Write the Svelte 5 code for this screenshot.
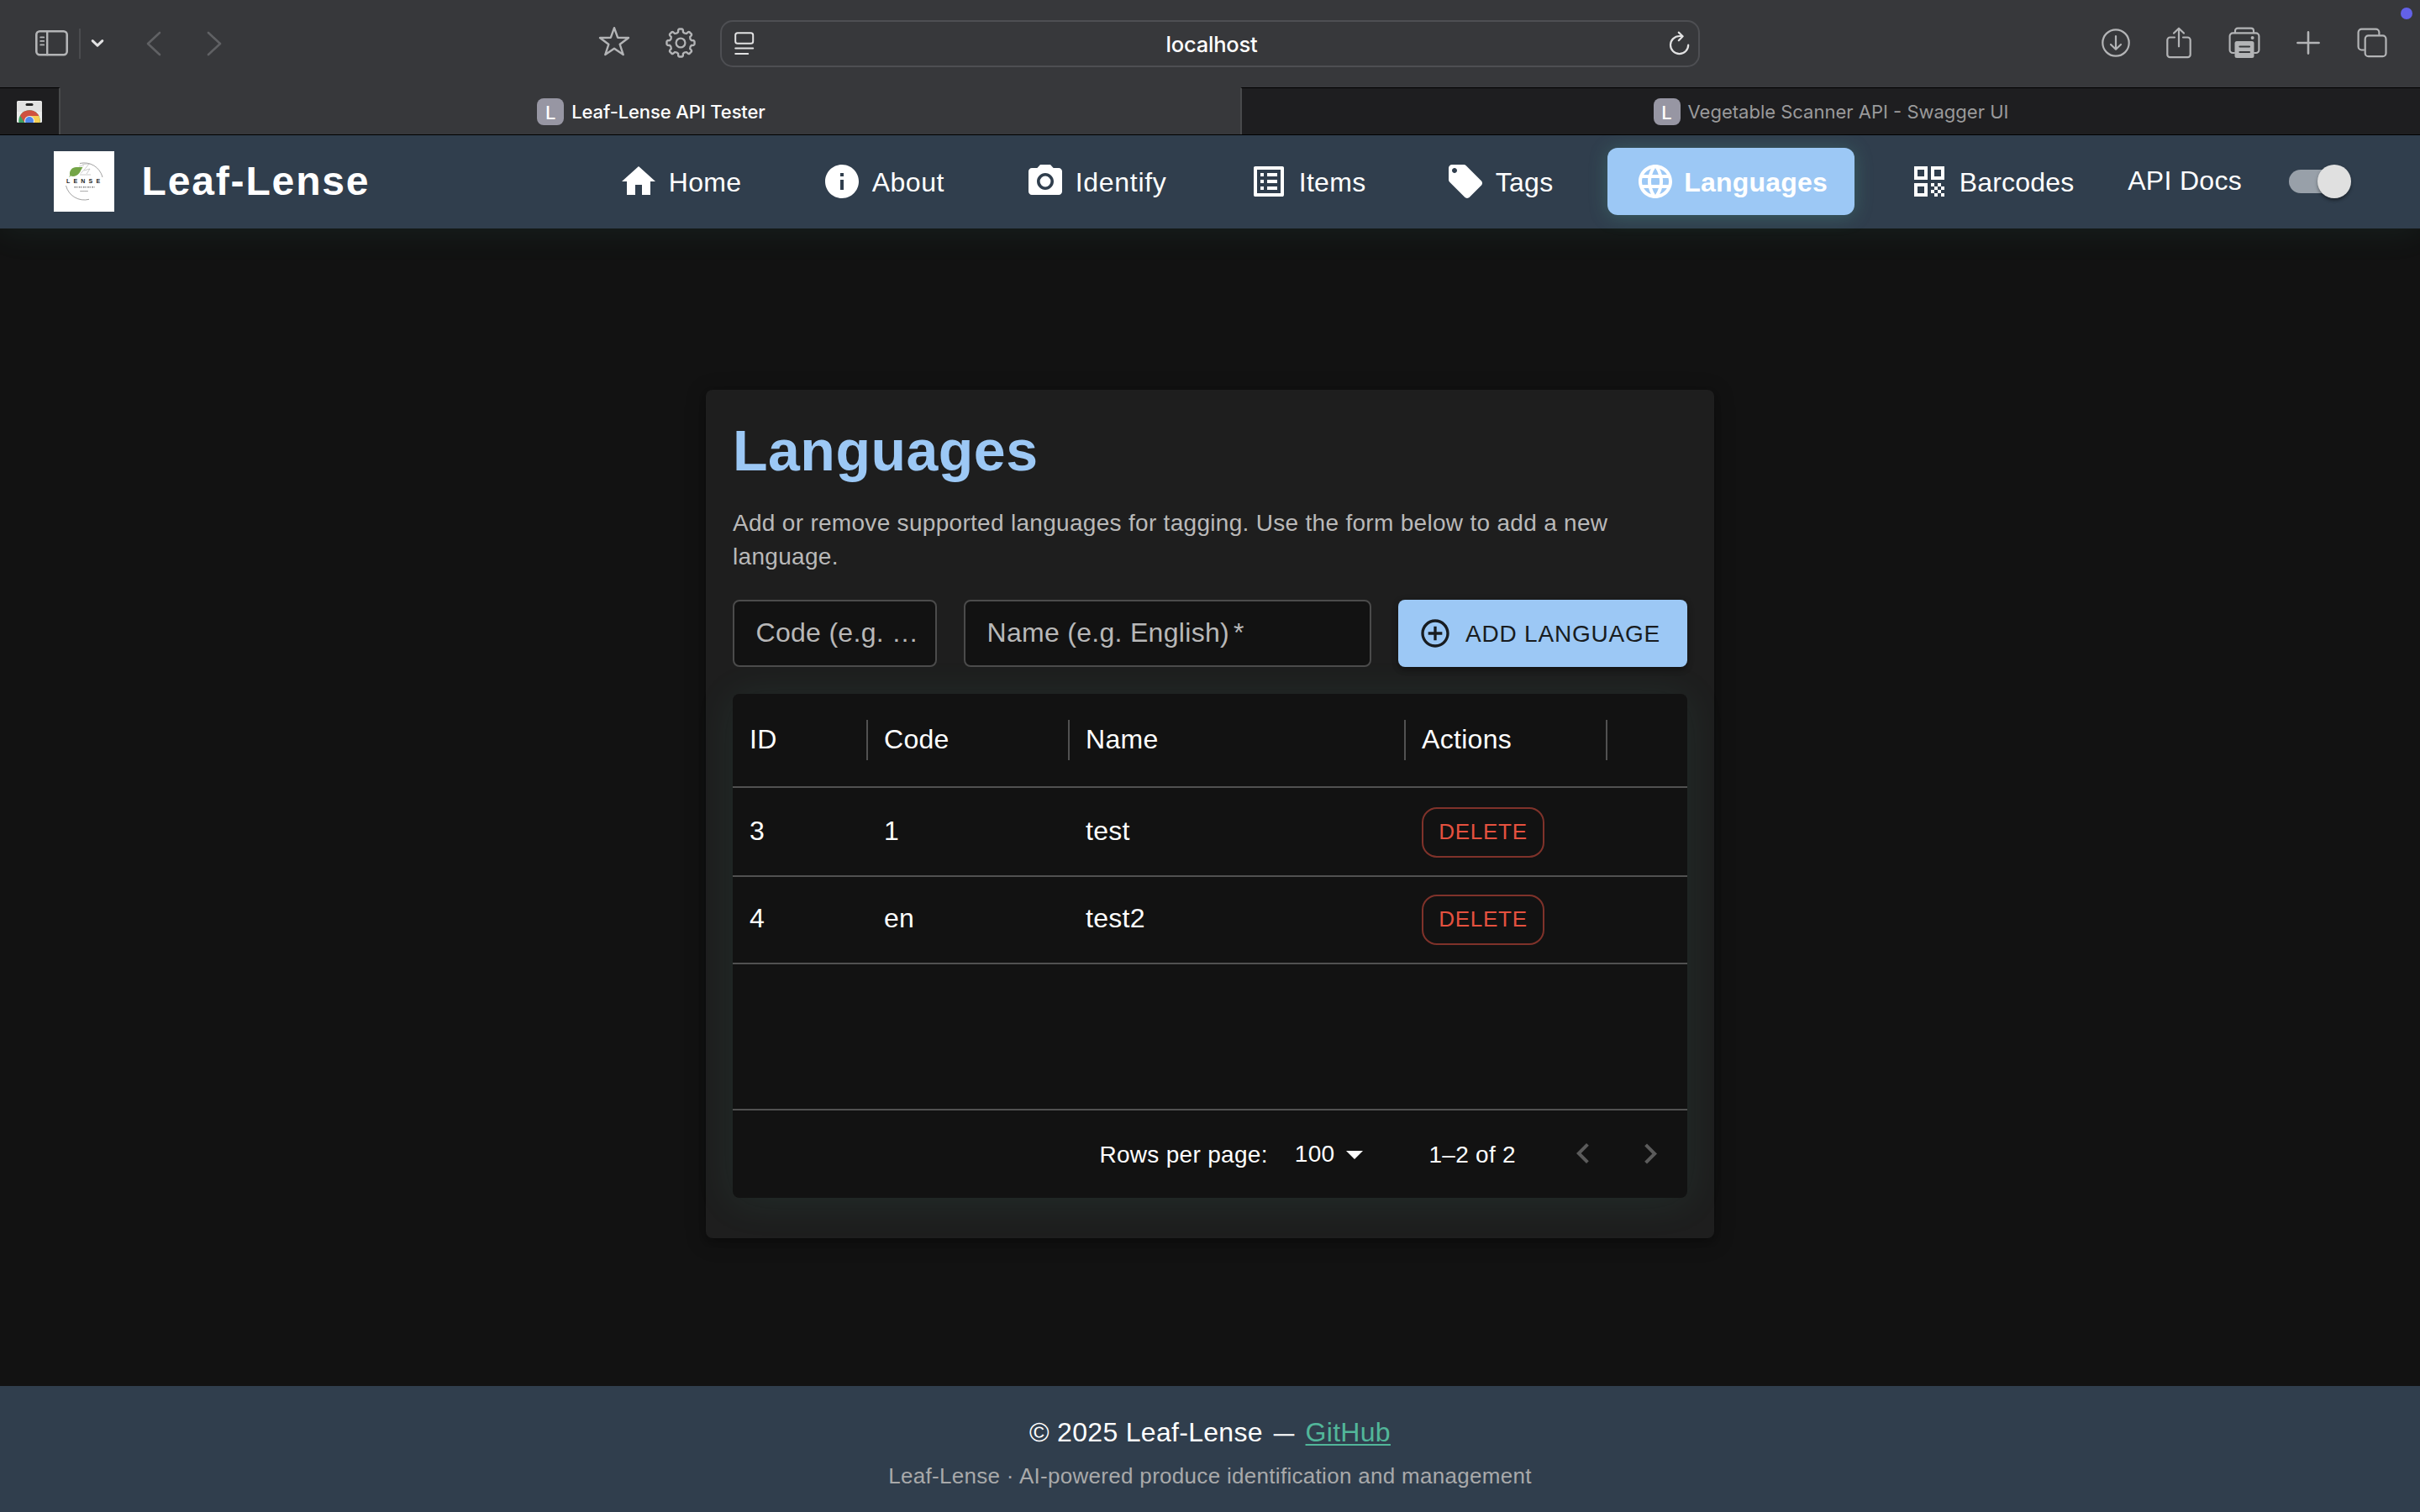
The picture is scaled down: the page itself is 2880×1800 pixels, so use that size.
<script>
  const nav = [
    { label: 'Home', width: 210, tracking: 0.3, icon: 'M10 20v-6h4v6h5v-8h3L12 3 2 12h3v8z' },
    {
      label: 'About',
      width: 210,
      tracking: 0.5,
      icon: 'M12 2C6.48 2 2 6.48 2 12s4.48 10 10 10 10-4.48 10-10S17.52 2 12 2m1 15h-2v-6h2zm0-8h-2V7h2z'
    },
    {
      label: 'Identify',
      width: 234,
      tracking: 0.7,
      icon: 'M12 8.8a3.2 3.2 0 1 0 0 6.4 3.2 3.2 0 1 0 0-6.4M9 2 7.17 4H4c-1.1 0-2 .9-2 2v12c0 1.1.9 2 2 2h16c1.1 0 2-.9 2-2V6c0-1.1-.9-2-2-2h-3.17L15 2zm3 15c-2.76 0-5-2.24-5-5s2.24-5 5-5 5 2.24 5 5-2.24 5-5 5'
    },
    {
      label: 'Items',
      width: 202,
      tracking: 0.3,
      icon: 'M19 5v14H5V5zm1.1-2H3.9c-.5 0-.9.4-.9.9v16.2c0 .4.4.9.9.9h16.2c.4 0 .9-.5.9-.9V3.9c0-.5-.5-.9-.9-.9M11 7h6v2h-6zm0 4h6v2h-6zm0 4h6v2h-6zM7 7h2v2H7zm0 4h2v2H7zm0 4h2v2H7z'
    },
    {
      label: 'Tags',
      width: 194,
      tracking: 0.3,
      icon: 'm21.41 11.58-9-9C12.05 2.22 11.55 2 11 2H4c-1.1 0-2 .9-2 2v7c0 .55.22 1.05.59 1.42l9 9c.36.36.86.58 1.41.58s1.05-.22 1.41-.59l7-7c.37-.36.59-.86.59-1.41s-.23-1.06-.59-1.42M5.5 7C4.67 7 4 6.33 4 5.5S4.67 4 5.5 4 7 4.67 7 5.5 6.33 7 5.5 7'
    },
    {
      label: 'Languages',
      width: 294,
      tracking: 0.2,
      active: true,
      icon: 'M11.99 2C6.47 2 2 6.48 2 12s4.47 10 9.99 10C17.52 22 22 17.52 22 12S17.52 2 11.99 2m6.93 6h-2.95c-.32-1.25-.78-2.45-1.38-3.56 1.84.63 3.37 1.91 4.33 3.56M12 4.04c.83 1.2 1.48 2.53 1.91 3.96h-3.82c.43-1.43 1.08-2.76 1.91-3.96M4.26 14C4.1 13.36 4 12.69 4 12s.1-1.36.26-2h3.38c-.08.66-.14 1.32-.14 2s.06 1.34.14 2zm.82 2h2.95c.32 1.25.78 2.45 1.38 3.56-1.84-.63-3.37-1.9-4.33-3.56m2.95-8H5.08c.96-1.66 2.49-2.93 4.33-3.56C8.81 5.55 8.35 6.75 8.03 8M12 19.96c-.83-1.2-1.48-2.53-1.91-3.96h3.82c-.43 1.43-1.08 2.76-1.91 3.96M14.34 14H9.66c-.09-.66-.16-1.32-.16-2s.07-1.35.16-2h4.68c.09.65.16 1.32.16 2s-.07 1.34-.16 2m.25 5.56c.6-1.11 1.06-2.31 1.38-3.56h2.95c-.96 1.65-2.49 2.93-4.33 3.56M16.36 14c.08-.66.14-1.32.14-2s-.06-1.34-.14-2h3.38c.16.64.26 1.31.26 2s-.1 1.36-.26 2z'
    },
    {
      label: 'Barcodes',
      width: 260,
      tracking: 0.2,
      icon: 'M3 11h8V3H3zm2-6h4v4H5zM3 21h8v-8H3zm2-6h4v4H5zm8-12v8h8V3zm6 6h-4V5h4zm0 10h2v2h-2zm-6-6h2v2h-2zm2 2h2v2h-2zm-2 2h2v2h-2zm2 2h2v2h-2zm2-2h2v2h-2zm0-4h2v2h-2zm2 2h2v2h-2z'
    }
  ];

  const rows = [
    { id: 3, code: '1', name: 'test' },
    { id: 4, code: 'en', name: 'test2' }
  ];

  // Eight-toothed gear outline centred on (18, 18).
  const polar = (r, deg) => {
    const a = ((deg - 90) * Math.PI) / 180;
    return `${(18 + r * Math.cos(a)).toFixed(2)} ${(18 + r * Math.sin(a)).toFixed(2)}`;
  };
  let gear = '';
  for (let k = 0; k < 8; k++) {
    const c = k * 45;
    gear += `${k ? 'L' : 'M'}${polar(13.2, c - 13)}L${polar(15.8, c - 10)}Q${polar(16.6, c - 8)} ${polar(16.6, c - 5)}L${polar(16.6, c + 5)}Q${polar(16.6, c + 8)} ${polar(15.8, c + 10)}L${polar(13.2, c + 13)}Q${polar(11.8, c + 22.5)} ${polar(13.2, c + 32)}`;
  }
  gear += 'Z';
</script>

<div class="page">
  <div class="toolbar">
    <div class="tools left">
      <svg class="sidebar" viewBox="0 0 40 32" width="40" height="32">
        <rect x="1.3" y="1.3" width="36.4" height="28" rx="4" stroke-width="2.6" />
        <path d="M14.2 1.5v27.5" stroke-width="2.4" />
        <path d="M6.2 8.4h4M6.2 12.9h4M6.2 17.4h4" stroke-width="1.8" />
      </svg>
      <span class="rule"></span>
      <svg class="caret" viewBox="0 0 16 12" width="16" height="12"><path d="M2.2 2.6 8 8.2l5.8-5.6" stroke-width="3" /></svg>
      <svg class="back" viewBox="0 0 18 30" width="18" height="30"><path d="M16 2 2 15l14 13" stroke-width="2.6" /></svg>
      <svg class="forward" viewBox="0 0 18 30" width="18" height="30"><path d="M2 2l14 13L2 28" stroke-width="2.6" /></svg>
    </div>
    <svg class="star" viewBox="0 0 38 36" width="38" height="36">
      <path d="M19 2.2 23.1 13.7 36 14 25.7 21.8 29.7 34 19 26.7 8.3 34 12.3 21.8 2 14 14.9 13.7z" stroke-width="2.4" />
    </svg>
    <svg class="gear" viewBox="0 0 36 36" width="36" height="36">
      <path d={gear} stroke-width="2.4" />
      <circle cx="18" cy="18" r="5.4" stroke-width="2.3" />
    </svg>
    <div class="address">
      <svg viewBox="0 0 24 28" width="24" height="28">
        <rect x="1.2" y="1.2" width="21" height="12.6" rx="2.6" stroke-width="2" />
        <path d="M1.2 19.6h21M1.2 26h15" stroke-width="2" />
      </svg>
      <span>localhost</span>
      <svg viewBox="0 0 26 30" width="26" height="30">
        <path d="M23.2 16.6a10.6 10.6 0 1 1-10.6-10.6h3.6" stroke-width="2.2" />
        <path d="M11.8 1.6 16.6 6.2 11.8 11.2" stroke-width="2.2" />
      </svg>
    </div>
    <div class="tools right">
      <svg viewBox="0 0 36 36" width="36" height="36">
        <circle cx="18" cy="18" r="15.7" stroke-width="2.2" />
        <path d="M18 10v15.5M12 20l6 5.7 6-5.7" stroke-width="2.2" />
      </svg>
      <svg class="share" viewBox="0 0 32 38" width="32" height="38">
        <path d="M11 12.5H5.5a3.2 3.2 0 0 0-3.2 3.2v17.3a3.2 3.2 0 0 0 3.2 3.2h21a3.2 3.2 0 0 0 3.2-3.2V15.7a3.2 3.2 0 0 0-3.2-3.2H21M16 23.3V2M10 7.5l6-5.8 6 5.8" stroke-width="2.2" />
      </svg>
      <svg class="print" viewBox="0 0 38 38" width="38" height="38">
        <path d="M8 7V4.6a3 3 0 0 1 3-3h16a3 3 0 0 1 3 3V7M7 31H5.2a3.6 3.6 0 0 1-3.6-3.6V11a3.6 3.6 0 0 1 3.6-3.6h27.6a3.6 3.6 0 0 1 3.6 3.6v16.4a3.6 3.6 0 0 1-3.6 3.6H31" stroke-width="2.1" />
        <path class="solid" d="M10 17h18a2.5 2.5 0 0 1 2.5 2.5v15a2.5 2.5 0 0 1-2.5 2.5H10a2.5 2.5 0 0 1-2.5-2.5v-15A2.5 2.5 0 0 1 10 17z" />
        <path class="cut" d="M13.5 23.5h11.5M13.5 30h11.5" stroke-width="2.2" />
        <circle class="solid" cx="28.6" cy="13" r="2" />
      </svg>
      <svg class="plus" viewBox="0 0 28 28" width="28" height="28"><path d="M14 1.4v25.2M1.4 14h25.2" stroke-width="2.6" /></svg>
      <svg class="overview" viewBox="0 0 36 36" width="36" height="36">
        <rect x="9.7" y="9.4" width="24.8" height="24.8" rx="4" stroke-width="2.2" />
        <path d="M8 26.5H5.6a4 4 0 0 1-4-4V5.6a4 4 0 0 1 4-4h16.8a4 4 0 0 1 4 4V7.8" stroke-width="2.2" />
      </svg>
    </div>
    <span class="indicator"></span>
  </div>

  <div class="tabs">
    <div class="pinned">
      <svg viewBox="0 0 30 26" width="30" height="26">
        <rect width="30" height="26" rx="1.5" fill="#ececec" />
        <path fill="#e2e2e2" d="M0 1h30v12H0z" />
        <rect x="10.5" y="3" width="9" height="3" rx="1.5" fill="#222" />
        <circle cx="15" cy="24" r="12.8" fill="#3fa162" />
        <path fill="#d0513f" d="M4 17.4A12.8 12.8 0 0 1 26.6 18.5L15 19.5 8.5 25z" />
        <path fill="#f6cf55" d="M15 18h11.3a12.8 12.8 0 0 1 1.3 8H15z" />
        <circle cx="15" cy="24" r="6" fill="#ececec" />
        <circle cx="15" cy="24" r="4.9" fill="#4f86ec" />
      </svg>
    </div>
    <div class="tab current"><span class="badge">L</span><span>Leaf-Lense API Tester</span></div>
    <div class="tab"><span class="badge">L</span><span>Vegetable Scanner API - Swagger UI</span></div>
  </div>

  <header>
    <svg class="logo" viewBox="0 0 72 72" width="72" height="72">
      <rect width="72" height="72" fill="#fff" />
      <g fill="none" stroke="#8b8b8b" stroke-width=".8">
        <path d="M31 14.5A22.5 22.5 0 0 1 58 31" />
        <path d="M14.5 41A22.5 22.5 0 0 0 42 57.3" />
        <path d="M32 26.5q6-6 10-11.5M34 15.5l9-.5M31 28h13M36 23l7-2-4 6M30 18l6-1" stroke="#b5b5b5" stroke-width=".7" />
        <path d="M24.5 42.8h24" stroke="#777" stroke-width="1.4" stroke-dasharray="1.6 .9 1.2 1.5" />
        <path d="M31.5 47.6h9.5" stroke="#888" stroke-width="1" stroke-dasharray="1.4 .5" />
      </g>
      <path fill="#74a547" d="M18 31c.5-.8.8-1.5 1.3-2.2-1.5-6 3-10 7.7-9.8 3 .3 5-.2 7.5 0-2 2.5-2.5 5-4.5 7.5-2.5 3.2-6.5 4.2-10 3z" />
      <text x="15" y="38" font-size="7">LENSE</text>
    </svg>
    <span class="brand">Leaf-Lense</span>
    <nav>
      {#each nav as item}
        <a class:active={item.active} style:width="{item.width}px" style:letter-spacing="{item.tracking}px">
          <svg viewBox="0 0 24 24" width="48" height="48"><path d={item.icon} /></svg>
          <span>{item.label}</span>
        </a>
      {/each}
    </nav>
    <span class="docs">API Docs</span>
    <span class="switch"><span class="thumb"></span></span>
  </header>

  <main>
    <section class="card">
      <h1>Languages</h1>
      <p>Add or remove supported languages for tagging. Use the form below to add a new language.</p>
      <div class="form">
        <div class="field code"><span>Code (e.g. …</span></div>
        <div class="field name"><span>Name (e.g. English)</span><span class="required">*</span></div>
        <button class="add">
          <svg viewBox="0 0 24 24" width="40" height="40">
            <path d="M13 7h-2v4H7v2h4v4h2v-4h4v-2h-4zm-1-5C6.48 2 2 6.48 2 12s4.48 10 10 10 10-4.48 10-10S17.52 2 12 2m0 18c-4.41 0-8-3.59-8-8s3.59-8 8-8 8 3.59 8 8-3.59 8-8 8" />
          </svg>
          <span>ADD LANGUAGE</span>
        </button>
      </div>

      <div class="grid">
        <div class="columns head">
          <span>ID</span><span>Code</span><span>Name</span><span>Actions</span>
        </div>
        <div class="body">
          {#each rows as row}
            <div class="columns row">
              <span>{row.id}</span><span>{row.code}</span><span>{row.name}</span>
              <div class="actions"><button class="delete">DELETE</button></div>
            </div>
          {/each}
        </div>
        <div class="pager">
          <span class="per-page">Rows per page:</span>
          <span class="size">100</span>
          <svg class="drop" viewBox="0 0 24 24" width="48" height="48"><path d="m7 10 5 5 5-5z" /></svg>
          <span class="range">1–2 of 2</span>
          <svg class="prev" viewBox="0 0 24 24" width="48" height="48"><path d="M15.41 16.09l-4.58-4.59 4.58-4.59L14 5.5l-6 6 6 6z" /></svg>
          <svg class="next" viewBox="0 0 24 24" width="48" height="48"><path d="M8.59 16.34l4.58-4.59-4.58-4.59L10 5.75l6 6-6 6z" /></svg>
        </div>
      </div>
    </section>
  </main>

  <footer>
    <div class="copyright">© 2025 Leaf-Lense <span class="dash">—</span> <a class="link">GitHub</a></div>
    <div class="tagline">Leaf-Lense · AI-powered produce identification and management</div>
  </footer>
</div>

<style>
  :global(body) {
    margin: 0;
    background: #121212;
  }
  * {
    box-sizing: border-box;
  }
  .page {
    display: flex;
    flex-direction: column;
    width: 2880px;
    height: 1800px;
    overflow: hidden;
    color: #fff;
    font-family: 'Liberation Sans', Arial, sans-serif;
    font-size: 32px;
    letter-spacing: 0.3px;
    white-space: nowrap;
  }
  svg {
    display: block;
    flex: none;
  }
  button {
    font: inherit;
    letter-spacing: inherit;
    margin: 0;
    padding: 0;
  }

  /* Browser toolbar */
  .toolbar {
    position: relative;
    flex: none;
    display: flex;
    align-items: flex-start;
    height: 104px;
    background: #37383b;
  }
  .toolbar svg {
    fill: none;
    stroke: #b3b4b6;
    stroke-linecap: round;
    stroke-linejoin: round;
  }
  .tools {
    display: flex;
    align-items: center;
    height: 104px;
    padding-bottom: 35px;
  }
  .left {
    width: 712px;
    padding-top: 34px;
    padding-left: 42px;
  }
  .rule {
    width: 2px;
    height: 36px;
    margin-left: 12px;
    background: #4b4c4f;
  }
  .toolbar .caret {
    margin-left: 12px;
    stroke: #e2e2e3;
  }
  .toolbar .back {
    margin-left: 50px;
    stroke: #606164;
  }
  .toolbar .forward {
    margin-left: 54px;
    stroke: #606164;
  }
  .star {
    margin-top: 31px;
  }
  .gear {
    margin: 33px 0 0 42px;
  }
  .address {
    display: flex;
    align-items: center;
    justify-content: space-between;
    width: 1166px;
    height: 56px;
    margin: 24px 0 0 29px;
    padding: 0 9px 0 15px;
    border: 2px solid #4e4f53;
    border-radius: 15px;
    font: 500 25.5px Inter, sans-serif;
    letter-spacing: -0.2px;
  }
  .toolbar .address svg {
    stroke: #e2e2e3;
  }
  .right {
    margin-left: 477px;
    padding-top: 33px;
  }
  .share {
    margin-left: 40.5px;
  }
  .print,
  .overview {
    margin-left: 43.5px;
  }
  .plus {
    margin-left: 43px;
  }
  .toolbar .solid {
    fill: #b3b4b6;
    stroke: none;
  }
  .toolbar .cut {
    stroke: #37383b;
  }
  .indicator {
    position: absolute;
    top: 9px;
    right: 9px;
    width: 14px;
    height: 14px;
    border-radius: 50%;
    background: #6361e8;
  }

  /* Tab strip, stacked above the glow of the application bar */
  .tabs {
    position: relative;
    z-index: 1;
    flex: none;
    display: flex;
    height: 56px;
    background: #37383b;
    font: 22px/1 Inter, sans-serif;
    letter-spacing: 0;
  }
  .pinned {
    display: flex;
    align-items: center;
    width: 72px;
    padding: 0 0 0 20px;
    border-top: 1px solid #000;
    border-right: 2px solid #48494b;
    background: #1e1e20;
  }
  .tab {
    display: flex;
    align-items: center;
    justify-content: center;
    width: 1404px;
    gap: 9px;
    padding-top: 2px;
    border-top: 1px solid #000;
    border-left: 2px solid #48494b;
    background: #1e1e20;
    color: #9a9a9b;
  }
  .tab span + span {
    padding-bottom: 1px;
  }
  .tab.current {
    border-color: transparent;
    background: #37383b;
    color: #fff;
    font-weight: 500;
    letter-spacing: -0.12px;
  }
  .badge {
    display: flex;
    align-items: center;
    justify-content: center;
    width: 32px;
    height: 32px;
    margin-top: -1px;
    padding-top: 2px;
    border-radius: 8px;
    background: #9796a3;
    color: #fff;
    font-size: 22px;
    font-weight: 500;
  }

  /* Application bar */
  header {
    position: relative;
    flex: none;
    display: flex;
    align-items: center;
    height: 112px;
    padding: 0 80px 0 64px;
    background: #303e4d;
    box-shadow: inset 0 1px #000, 0 4px 40px rgba(82, 182, 154, 0.09);
  }
  .logo text {
    fill: #222;
    font-weight: 700;
    letter-spacing: 4.2px;
  }
  .brand {
    margin-left: 32.5px;
    padding-bottom: 2px;
    font-size: 48px;
    font-weight: 700;
    letter-spacing: 1.85px;
  }
  nav {
    display: flex;
    gap: 32px;
    margin-left: auto;
  }
  nav a {
    display: flex;
    align-items: center;
    gap: 11.5px;
    height: 80px;
    padding-left: 32px;
    border-radius: 12px;
  }
  nav svg {
    fill: #fff;
  }
  nav a span {
    padding-top: 2px;
  }
  nav .active {
    gap: 10px;
    margin: 0 1px 0 -1px;
    padding-left: 33px;
    background: #9cc8f5;
    font-weight: 700;
    box-shadow: 0 2px 22px rgba(82, 182, 154, 0.28);
  }
  .docs {
    margin-left: 32px;
    padding-bottom: 2px;
  }
  .switch {
    display: flex;
    align-items: center;
    justify-content: flex-end;
    width: 68px;
    height: 28px;
    margin: 0 8px 0 56px;
    border-radius: 14px;
    background: #98a0a9;
  }
  .thumb {
    flex: none;
    width: 40px;
    height: 40px;
    margin-right: -6px;
    border-radius: 50%;
    background: #e0e0e0;
    box-shadow: 0 4px 4px -2px rgba(0, 0, 0, 0.3), 0 2px 4px rgba(0, 0, 0, 0.25);
  }

  /* Languages card */
  main {
    flex: 1;
    display: flex;
    align-items: flex-start;
    justify-content: center;
    padding-top: 192px;
    background: #121212;
  }
  .card {
    width: 1200px;
    height: 1010px;
    padding: 32px;
    border-radius: 8px;
    background: #1e1e1e;
    box-shadow: 0 4px 8px rgba(0, 0, 0, 0.2), 0 4px 24px rgba(0, 0, 0, 0.25);
  }
  h1 {
    margin: 0;
    color: #9cc8f5;
    font-size: 68px;
    line-height: 80px;
    letter-spacing: 0.5px;
  }
  p {
    margin: 27px 0 31px;
    color: #b9b9b9;
    font-size: 28px;
    line-height: 40px;
    white-space: normal;
  }
  .form {
    display: flex;
    gap: 32px;
    margin-bottom: 32px;
  }
  .field {
    display: flex;
    align-items: center;
    height: 80px;
    padding: 0 0 2px 25.5px;
    border: 2px solid #4b4b4b;
    border-radius: 8px;
    background: #121212;
    color: #b8b8b8;
  }
  .code {
    width: 243px;
  }
  .name {
    width: 485px;
  }
  .required {
    margin-left: 5px;
  }
  .add {
    display: flex;
    align-items: center;
    flex: 1;
    gap: 16px;
    padding-left: 24px;
    border: 0;
    border-radius: 8px;
    background: #9cc8f5;
    color: #181c20;
    font-size: 28px;
    letter-spacing: 0.8px;
    box-shadow: 0 4px 6px rgba(0, 0, 0, 0.25), 0 2px 10px rgba(0, 0, 0, 0.15);
  }
  .add span {
    padding-top: 1px;
  }
  .add svg {
    fill: #181c20;
  }

  /* Data grid */
  .grid {
    display: flex;
    flex-direction: column;
    height: 600px;
    border-radius: 8px;
    background: #121212;
    box-shadow: 0 4px 48px rgba(82, 182, 154, 0.1);
  }
  .columns {
    display: grid;
    grid-template-columns: 160px 240px 400px 240px;
    align-items: center;
    border-bottom: 2px solid #515151;
  }
  .columns > * {
    padding-left: 20px;
  }
  .head {
    height: 112px;
  }
  .head span {
    display: flex;
    align-items: center;
    height: 48px;
    padding-bottom: 2px;
    border-right: 2px solid #515151;
    margin-right: -1px;
  }
  .body {
    flex: 1;
    padding-top: 2px;
  }
  .row {
    height: 104px;
  }
  .row span {
    padding-bottom: 4px;
  }
  .delete {
    display: block;
    width: 146px;
    height: 60px;
    padding-bottom: 2px;
    border: 2px solid #7f322a;
    border-radius: 18px;
    background: none;
    color: #e5513f;
    font-size: 26px;
    letter-spacing: 0.74px;
  }
  .pager {
    display: flex;
    align-items: center;
    justify-content: flex-end;
    height: 106px;
    padding: 0 20px 0 0;
    border-top: 2px solid #515151;
    font-size: 28px;
  }
  .pager svg {
    fill: #fff;
  }
  .per-page,
  .range {
    padding-top: 2px;
  }
  .size {
    margin-left: 32px;
  }
  .range {
    margin-left: 64px;
  }
  .pager .prev,
  .pager .next {
    fill: #5b5b5b;
    margin-left: 32px;
  }
  .pager .prev {
    margin-left: 56px;
  }

  /* Footer */
  footer {
    flex: none;
    display: flex;
    flex-direction: column;
    align-items: center;
    height: 150px;
    padding-top: 30px;
    background: #303e4d;
  }
  .copyright {
    line-height: 50px;
  }
  .dash {
    padding: 0 4px;
    font-size: 24px;
    line-height: 0;
    vertical-align: 2px;
    -webkit-text-stroke: 0.5px #fff;
  }
  .link {
    color: #52b69a;
    text-decoration: underline;
    text-decoration-thickness: 2px;
    text-underline-offset: 3px;
  }
  .tagline {
    margin-top: 8px;
    color: #a8a9aa;
    font-size: 26px;
    line-height: 38px;
  }
</style>
